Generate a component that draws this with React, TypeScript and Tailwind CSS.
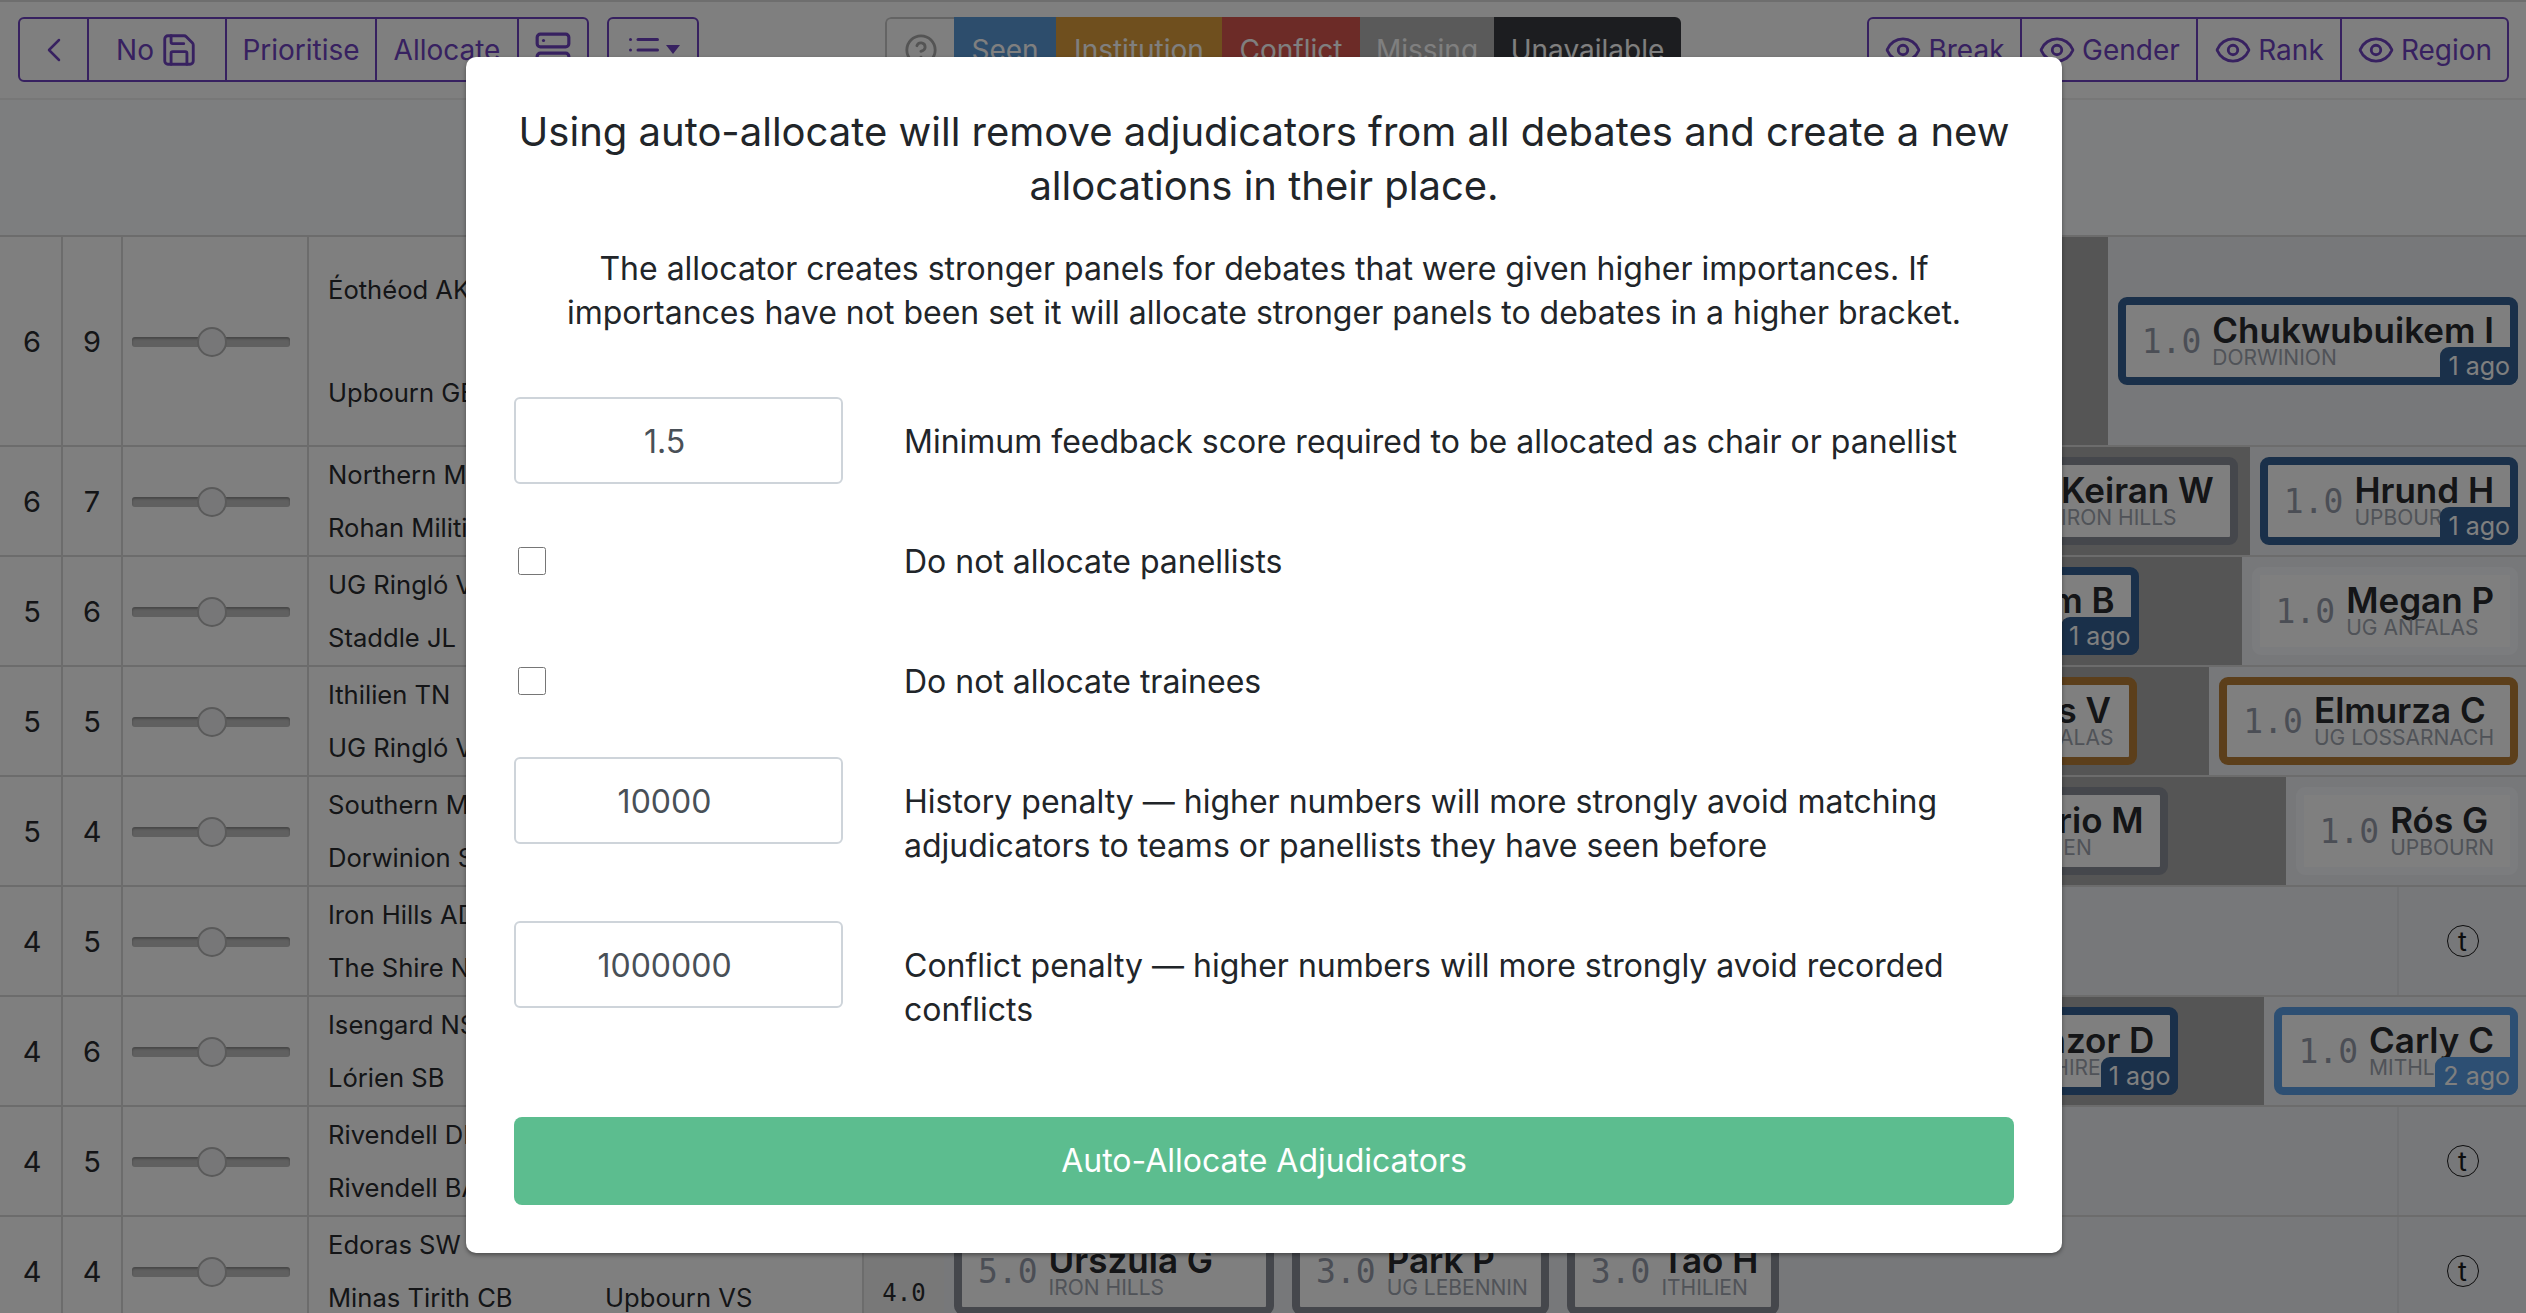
import { ChevronLeft, CircleHelp, Eye, List, Save, Server } from "lucide-react";

type Adj = {
  score: string;
  name: string;
  inst: string;
  tone: string;
  ago?: string;
  badge?: string;
  pad?: string;
};

type Row = {
  pts: string;
  wins: string;
  teams: string[];
  panel?: Adj;
  panelGap?: string;
  last?: Adj;
};

const blue = "border-[#346094]";
const blueBadge = "bg-[#346094]";
const grey = "border-[#8a8e98]";
const amber = "border-[#b87e36]";
const faint = "border-[#f6f8fc]";

const rows: Row[] = [
  {
    pts: "6",
    wins: "9",
    teams: ["Éothéod AK", "", "Upbourn GE", ""],
    last: { score: "1.0", name: "Chukwubuikem I", inst: "DORWINION", tone: blue, ago: "1 ago", badge: blueBadge },
  },
  {
    pts: "6",
    wins: "7",
    teams: ["Northern M", "", "Rohan Militia", ""],
    panel: { score: "1.0", name: "Keiran W", inst: "IRON HILLS", tone: grey },
    panelGap: "mr-[12px]",
    last: { score: "1.0", name: "Hrund H", inst: "UPBOURN", tone: blue, ago: "1 ago", badge: blueBadge },
  },
  {
    pts: "5",
    wins: "6",
    teams: ["UG Ringló V", "", "Staddle JL", ""],
    panel: { score: "1.0", name: "Liam B", inst: "ROHAN", tone: blue, ago: "1 ago", badge: blueBadge },
    panelGap: "mr-[103px]",
    last: { score: "1.0", name: "Megan P", inst: "UG ANFALAS", tone: faint },
  },
  {
    pts: "5",
    wins: "5",
    teams: ["Ithilien TN", "", "UG Ringló V", ""],
    panel: { score: "1.0", name: "Denis V", inst: "UG ANFALAS", tone: amber },
    panelGap: "mr-[72px]",
    last: { score: "1.0", name: "Elmurza C", inst: "UG LOSSARNACH", tone: amber },
  },
  {
    pts: "5",
    wins: "4",
    teams: ["Southern M", "", "Dorwinion S", ""],
    panel: { score: "1.0", name: "Mario M", inst: "ITHILIEN", tone: grey },
    panelGap: "mr-[118px]",
    last: { score: "1.0", name: "Rós G", inst: "UPBOURN", tone: faint },
  },
  { pts: "4", wins: "5", teams: ["Iron Hills AD", "", "The Shire N", ""] },
  {
    pts: "4",
    wins: "6",
    teams: ["Isengard NS", "", "Lórien SB", ""],
    panel: { score: "1.0", name: "Manzor D", inst: "THE SHIRE", tone: blue, ago: "1 ago", badge: blueBadge },
    panelGap: "mr-[86px]",
    last: { score: "1.0", name: "Carly C", inst: "MITHLOND", tone: "border-[#5a9ee6]", ago: "2 ago", badge: "bg-[#5a9ee6]" },
  },
  { pts: "4", wins: "5", teams: ["Rivendell DI", "", "Rivendell BA", ""] },
];

function AdjCard({ adj }: { adj: Adj }) {
  return (
    <div className={`relative flex h-[88px] shrink-0 items-center gap-[11px] rounded-[9px] border-[8px] bg-white pl-[16px] ${adj.pad ?? "pr-[16px]"} ${adj.tone}`}>
      <span className="text-[33px] leading-none text-[#969cab] [font-family:'DejaVu_Sans_Mono',monospace]">{adj.score}</span>
      <div className="flex flex-col">
        <span className="whitespace-nowrap text-[35px] font-semibold leading-[34px] text-[#282a2e]">{adj.name}</span>
        <span className="whitespace-nowrap text-[21px] leading-[22px] text-[#a0a6b0]">{adj.inst}</span>
      </div>
      {adj.ago && (
        <span className={`absolute -bottom-[8px] -right-[8px] rounded-tl-[9px] rounded-br-[9px] px-[8px] text-[25px] leading-[38px] text-white ${adj.badge}`}>
          {adj.ago}
        </span>
      )}
    </div>
  );
}

function Slider() {
  return (
    <div className="relative mx-[9px] h-[10px] w-[158px] rounded-[3px] bg-[#c0c0c0] shadow-[inset_0_2px_2px_rgba(0,0,0,0.25)]">
      <div className="absolute left-[65px] top-[-10px] h-[30px] w-[30px] rounded-full border-2 border-[#b4b4b4] bg-[#eeeff1]" />
    </div>
  );
}

function TeamGrid({ teams }: { teams: string[] }) {
  return (
    <div className="grid w-[555px] shrink-0 grid-cols-[277px_1fr] grid-rows-2 items-center border-r-2 border-[#d8d8d8] bg-white pl-[19px] pt-[2px] text-[25.6px] text-[#292b2e]">
      {teams.map((team, i) => (
        <span key={i}>{team}</span>
      ))}
    </div>
  );
}

function Lead({ row }: { row: Row }) {
  return (
    <>
      <div className="flex w-[63px] shrink-0 items-center justify-center border-r-2 border-[#d8d8d8] bg-white pl-[3px] pt-[2px] text-[29px] text-[#292b2e]">{row.pts}</div>
      <div className="flex w-[60px] shrink-0 items-center justify-center border-r-2 border-[#d8d8d8] bg-white pt-[2px] text-[29px] text-[#292b2e]">{row.wins}</div>
      <div className="flex w-[186px] shrink-0 items-center border-r-2 border-[#d8d8d8] bg-white pt-[2px]">
        <Slider />
      </div>
    </>
  );
}

function TCell() {
  return (
    <div className="flex w-[129px] shrink-0 items-center justify-center self-stretch border-l-2 border-[#e2e4e8]">
      <span className="flex h-[32px] w-[32px] items-center justify-center rounded-full border border-[#1c1c1c] text-[27px] leading-none text-[#1c1c1c]">t</span>
    </div>
  );
}

function PageRow({ row, tall }: { row: Row; tall?: boolean }) {
  return (
    <div className={`flex border-b-2 border-[#d8d8d8] ${tall ? "h-[210px]" : "h-[110px]"}`}>
      <Lead row={row} />
      <TeamGrid teams={row.teams} />
      <div className="w-[80px] shrink-0 bg-[#f0f0f0]" />
      {row.last ? (
        <div className="flex min-w-0 flex-1 bg-[#eef0f4]">
          <div className="flex min-w-0 flex-1 items-center justify-end bg-[#aaaaaa]">
            {row.panel && (
              <div className={row.panelGap}>
                <AdjCard adj={row.panel} />
              </div>
            )}
          </div>
          <div className="ml-[10px] mr-[8px] flex items-center">
            <AdjCard adj={row.last} />
          </div>
        </div>
      ) : (
        <div className="flex flex-1 justify-end bg-[#eef0f4]">
          <TCell />
        </div>
      )}
    </div>
  );
}

function ToolButton({ children, className = "" }: { children: React.ReactNode; className?: string }) {
  return <div className={`flex h-full items-center justify-center gap-[6px] text-[28px] text-[#6f42c1] ${className}`}>{children}</div>;
}

function Toolbar() {
  return (
    <div className="flex h-[100px] items-start border-y-2 border-t-[#dcdcdc] border-b-[#efefef] bg-white pl-[18px] pt-[15px]">
      <div className="flex h-[65px] w-[571px] rounded-[6px] border-2 border-[#6f42c1]">
        <ToolButton className="w-[69px] border-r-2 border-[#6f42c1]">
          <ChevronLeft size={40} strokeWidth={1.5} />
        </ToolButton>
        <ToolButton className="w-[138px] border-r-2 border-[#6f42c1]">
          No <Save size={38} strokeWidth={1.8} />
        </ToolButton>
        <ToolButton className="w-[150px] border-r-2 border-[#6f42c1]">Prioritise</ToolButton>
        <ToolButton className="w-[142px] border-r-2 border-[#6f42c1]">Allocate</ToolButton>
        <ToolButton className="flex-1">
          <Server size={38} strokeWidth={2} />
        </ToolButton>
      </div>
      <div className="ml-[18px] flex h-[65px] w-[92px] items-center justify-center gap-[4px] rounded-[6px] border-2 border-[#6f42c1] text-[#6f42c1]">
        <List size={36} strokeWidth={2} />
        <span className="h-0 w-0 border-x-[7px] border-t-[9px] border-x-transparent border-t-[#6f42c1]" />
      </div>
      <div className="ml-[186px] flex h-[65px] overflow-hidden rounded-[6px] text-[28px] text-white">
        <div className="flex w-[69px] items-center justify-center rounded-l-[6px] border-2 border-r-0 border-[#c8c8c8] bg-white text-[#a8a8a8]">
          <CircleHelp size={34} strokeWidth={2} />
        </div>
        <div className="flex w-[102px] items-center justify-center bg-[#5a9ad8]">Seen</div>
        <div className="flex w-[166px] items-center justify-center bg-[#de9e3c]">Institution</div>
        <div className="flex w-[138px] items-center justify-center bg-[#d8564e]">Conflict</div>
        <div className="flex w-[134px] items-center justify-center bg-[#b4b4b4]">Missing</div>
        <div className="flex w-[187px] items-center justify-center bg-[#383a40]">Unavailable</div>
      </div>
      <div className="ml-[186px] flex h-[65px] w-[642px] rounded-[6px] border-2 border-[#6f42c1]">
        <ToolButton className="w-[153px] border-r-2 border-[#6f42c1]">
          <Eye size={38} strokeWidth={1.8} /> Break
        </ToolButton>
        <ToolButton className="w-[176px] border-r-2 border-[#6f42c1]">
          <Eye size={38} strokeWidth={1.8} /> Gender
        </ToolButton>
        <ToolButton className="w-[144px] border-r-2 border-[#6f42c1]">
          <Eye size={38} strokeWidth={1.8} /> Rank
        </ToolButton>
        <ToolButton className="flex-1">
          <Eye size={38} strokeWidth={1.8} /> Region
        </ToolButton>
      </div>
    </div>
  );
}

function LastRow() {
  const row: Row = { pts: "4", wins: "4", teams: ["Edoras SW", "", "Minas Tirith CB", "Upbourn VS"] };
  return (
    <div className="flex h-[110px] border-b-2 border-[#d8d8d8]">
      <Lead row={row} />
      <TeamGrid teams={row.teams} />
      <div className="flex w-[80px] shrink-0 items-end justify-center bg-[#f0f0f0] pb-[14px] text-[24px] text-[#292b2e] [font-family:'DejaVu_Sans_Mono',monospace]">4.0</div>
      <div className="flex flex-1 items-center gap-[18px] bg-[#eef0f4] pl-[10px]">
        <AdjCard adj={{ score: "5.0", name: "Urszula G", inst: "IRON HILLS", tone: grey, pad: "pr-[53px]" }} />
        <AdjCard adj={{ score: "3.0", name: "Park P", inst: "UG LEBENNIN", tone: grey, pad: "pr-[13px]" }} />
        <AdjCard adj={{ score: "3.0", name: "Tao H", inst: "ITHILIEN", tone: grey, pad: "pr-[13px]" }} />
        <div className="flex-1" />
        <TCell />
      </div>
    </div>
  );
}

function Field({ value, children }: { value: string; children: React.ReactNode }) {
  return (
    <div className="grid grid-cols-[329px_1fr] items-start gap-x-[61px]">
      <input
        readOnly
        value={value}
        className="h-[87px] w-full rounded-[6px] border-2 border-[#ced4da] bg-white pr-[28px] pt-[2px] text-center text-[32px] text-[#495057]"
      />
      <div className="pb-[20px] pt-[23px] text-[32px] leading-[44px] text-[#212529]">{children}</div>
    </div>
  );
}

function Check({ children }: { children: React.ReactNode }) {
  return (
    <div className="grid grid-cols-[329px_1fr] items-center gap-x-[61px]">
      <input type="checkbox" className="ml-[4px] h-[28px] w-[28px]" />
      <div className="pb-[20px] pt-[23px] text-[32px] leading-[44px] text-[#212529]">{children}</div>
    </div>
  );
}

export default function App() {
  return (
    <div className="relative h-[1313px] w-[2526px] overflow-hidden bg-[#fafcff] font-['Inter',sans-serif]">
      <Toolbar />
      <div className="h-[137px] border-b-2 border-[#d8d8d8] bg-[#fafcff]" />
      {rows.map((row, i) => (
        <PageRow key={i} row={row} tall={i === 0} />
      ))}
      <LastRow />

      <div className="absolute inset-0 flex justify-center bg-black/50 pl-[2px] pt-[57px]">
        <div className="h-[1196px] w-[1596px] rounded-[10px] bg-white p-[48px] shadow-[0_2px_4px_rgba(0,0,0,0.4)]">
          <h2 className="text-center text-[40px] leading-[54px] text-[#212529]">
            Using auto-allocate will remove adjudicators from all debates and create a new allocations in their place.
          </h2>
          <p className="mb-[62px] mt-[34px] text-center text-[32px] leading-[44px] text-[#212529]">
            The allocator creates stronger panels for debates that were given higher importances. If importances have not been set it will allocate stronger panels to debates in a higher bracket.
          </p>
          <div className="flex flex-col gap-[33px]">
            <Field value="1.5">Minimum feedback score required to be allocated as chair or panellist</Field>
            <Check>Do not allocate panellists</Check>
            <Check>Do not allocate trainees</Check>
            <Field value="10000">History penalty — higher numbers will more strongly avoid matching adjudicators to teams or panellists they have seen before</Field>
            <Field value="1000000">Conflict penalty — higher numbers will more strongly avoid recorded conflicts</Field>
          </div>
          <button className="mt-[65px] h-[88px] w-full rounded-[8px] bg-[#5cbd8f] text-[32px] text-white">Auto-Allocate Adjudicators</button>
        </div>
      </div>
    </div>
  );
}
